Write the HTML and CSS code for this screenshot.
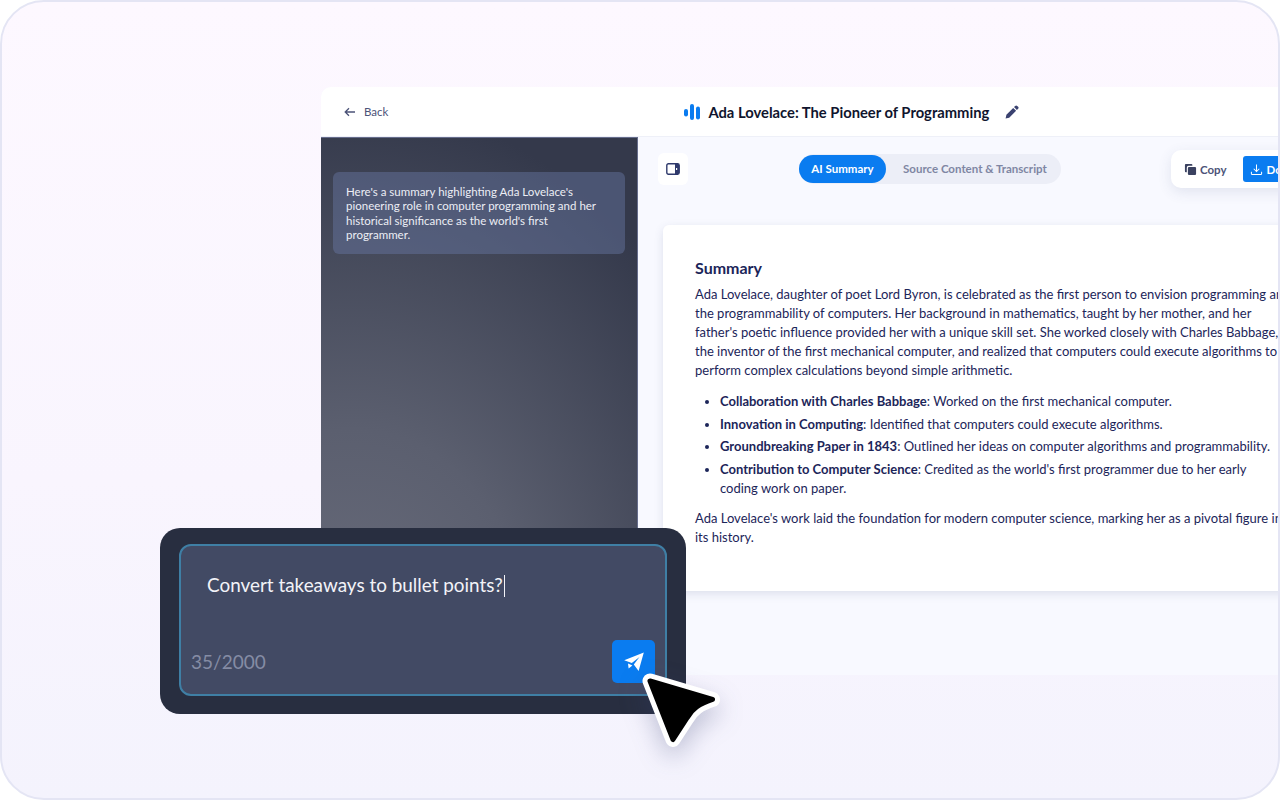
FILE: index.html
```html
<!DOCTYPE html>
<html lang="en">
<head>
    <meta charset="UTF-8">
    <title>Ada Lovelace: The Pioneer of Programming</title>
    <link rel="stylesheet" href="styles.css">
</head>
<body>
    <div class="frame">

        <!-- app window -->
        <div class="app">
            <div class="topbar">
                <a class="back">
                    <svg class="back-icon" viewBox="0 0 12 10"><path d="M11 5H1.5M5 1.2 1.2 5 5 8.8"/></svg>
                    Back
                </a>
                <div class="title">
                    <svg class="logo" viewBox="0 0 16 16"><rect x="0" y="5" width="4" height="7.5" rx="2"/><rect x="6" y="0" width="4" height="16" rx="2"/><rect x="12" y="2.5" width="4" height="13" rx="2"/></svg>
                    <span>Ada Lovelace: The Pioneer of Programming</span>
                    <svg class="pencil" viewBox="0 0 14 14"><path d="M10.2.9a1.4 1.4 0 0 1 2 0l.9.9a1.4 1.4 0 0 1 0 2l-1.2 1.2-2.9-2.9zM8.2 2.9l2.9 2.9-6.9 6.9-3.6.8.8-3.7z"/></svg>
                </div>
            </div>

            <div class="body">
                <div class="chat-panel">
                    <div class="bubble">Here's a summary highlighting Ada Lovelace's<br>pioneering role in computer programming and her<br>historical significance as the world's first<br>programmer.</div>
                </div>

                <div class="main">
                    <div class="toolbar">
                        <button class="panel-toggle">
                            <svg viewBox="0 0 14 12"><rect x="0.8" y="0.8" width="12.4" height="10.4" rx="1.6" class="panel-outline"/><path d="M9 0.8h2.6a1.6 1.6 0 0 1 1.6 1.6v7.2a1.6 1.6 0 0 1-1.6 1.6H9z" class="panel-fill"/><rect x="10" y="5" width="1.2" height="2" fill="#fff"/></svg>
                        </button>
                        <div class="tabs">
                            <div class="tab active">AI Summary</div>
                            <div class="tab">Source Content &amp; Transcript</div>
                        </div>
                        <div class="actions">
                            <button class="copy-btn">
                                <svg viewBox="0 0 14 14"><path d="M2 1h6a1 1 0 0 1 1 1v1H5a2 2 0 0 0-2 2v5H2a1 1 0 0 1-1-1V2a1 1 0 0 1 1-1z" fill="#3a4160"/><rect x="4.2" y="4.2" width="8.8" height="8.8" rx="1.2" fill="#3a4160"/></svg>
                                Copy
                            </button>
                            <button class="download-btn">
                                <svg viewBox="0 0 14 14"><path d="M7 1.5v7.5M4 6.2 7 9.2l3-3M1.5 9.5v2a1 1 0 0 0 1 1h9a1 1 0 0 0 1-1v-2"/></svg>
                                Download
                            </button>
                        </div>
                    </div>

                    <div class="doc">
                        <h2>Summary</h2>
                        <p>Ada Lovelace, daughter of poet Lord Byron, is celebrated as the first person to envision programming and<br>the programmability of computers. Her background in mathematics, taught by her mother, and her<br>father's poetic influence provided her with a unique skill set. She worked closely with Charles Babbage,<br>the inventor of the first mechanical computer, and realized that computers could execute algorithms to<br>perform complex calculations beyond simple arithmetic.</p>
                        <ul>
                            <li><b>Collaboration with Charles Babbage</b>: Worked on the first mechanical computer.</li>
                            <li><b>Innovation in Computing</b>: Identified that computers could execute algorithms.</li>
                            <li><b>Groundbreaking Paper in 1843</b>: Outlined her ideas on computer algorithms and programmability.</li>
                            <li><b>Contribution to Computer Science</b>: Credited as the world's first programmer due to her early<br>coding work on paper.</li>
                        </ul>
                        <p>Ada Lovelace's work laid the foundation for modern computer science, marking her as a pivotal figure in<br>its history.</p>
                    </div>
                </div>
            </div>
        </div>

        <!-- floating prompt box -->
        <div class="prompt">
            <div class="prompt-inner">
                <div class="prompt-text">Convert takeaways to bullet points?<span class="caret"></span></div>
                <div class="prompt-foot">
                    <span class="counter">35/2000</span>
                    <button class="send">
                        <svg viewBox="0 0 20 20"><path d="M19.8.5 14.6 19 9.8 12.6 15.5 5 7.8 10.9.2 8.2z"/><path d="M4 11.5 8.4 13.6 4.6 16.6z"/></svg>
                    </button>
                </div>
            </div>
        </div>

        <svg class="pointer" viewBox="0 0 90 90">
            <path class="pointer-edge" d="M10 13 72.5 31.5 C59 36 52 41 47 50 L33 71.5 Z"/>
            <path class="pointer-fill" d="M10 13 72.5 31.5 C59 36 52 41 47 50 L33 71.5 Z"/>
        </svg>
    </div>
</body>
</html>
```

FILE: styles.css
```css
* {
    margin: 0;
    padding: 0;
    box-sizing: border-box;
}

body {
    font-family: Lato, "Open Sans", sans-serif;
    background: #fff;
    color: #1c2559;
}

button {
    border: none;
    font-family: inherit;
    cursor: pointer;
}

.frame {
    position: relative;
    width: 1280px;
    height: 800px;
    padding: 85px 0 0 319px;
    overflow: hidden;
    border: 2px solid #e4e5f4;
    border-radius: 44px;
    background: linear-gradient(180deg, #fdf8ff 0%, #f9f5fe 60%, #f4f3fd 100%);
}

/* ---------- app window ---------- */

.app {
    width: 1000px;
    height: 588px;
    display: flex;
    flex-direction: column;
    border-radius: 10px 0 0 0;
    overflow: hidden;
    background: #f8f9ff;
}

.topbar {
    height: 50px;
    display: flex;
    align-items: center;
    position: relative;
    padding-left: 23px;
    background: #fff;
    border-bottom: 1px solid #eef0f8;
}

.back {
    display: flex;
    align-items: center;
    gap: 8px;
    font-size: 11.5px;
    color: #4c5378;
}

.back-icon {
    width: 12px;
    height: 10px;
    fill: none;
    stroke: #4c5378;
    stroke-width: 1.3;
}

.title {
    display: flex;
    align-items: center;
    margin-left: 296px;
    font-size: 14.75px;
    font-weight: 700;
    color: #10152e;
}

.logo {
    width: 16px;
    height: 16px;
    margin-right: 8px;
    fill: #0a7cf0;
}

.pencil {
    width: 14px;
    height: 14px;
    margin-left: 16px;
    fill: #3a4270;
}

.body {
    flex: 1;
    display: flex;
    min-height: 0;
}

.chat-panel {
    width: 317px;
    padding: 34px 12px 0 12px;
    background: radial-gradient(ellipse 430px 560px at 10% 98%, #6a6d7c 0%, #5b5f6f 42%, #34394b 100%);
    border-top: 1px solid #666d8c;
    border-right: 1px solid #666d8c;
}

.bubble {
    height: 82px;
    padding: 13px;
    font-size: 11.5px;
    line-height: 14.4px;
    color: #eceef5;
    background: rgba(105, 120, 165, 0.45);
    border-radius: 6px;
}

.main {
    flex: 1;
    min-width: 0;
    padding: 13px 0 0 20px;
}

.toolbar {
    display: flex;
    align-items: flex-start;
    height: 75px;
}

.panel-toggle {
    flex: none;
    width: 30px;
    height: 32px;
    margin-top: 3px;
    display: flex;
    align-items: center;
    justify-content: center;
    background: #fff;
    border-radius: 6px;
}

.panel-toggle svg {
    width: 14px;
    height: 12px;
}

.panel-outline {
    fill: #fff;
    stroke: #2f3a6c;
    stroke-width: 1.4;
}

.panel-fill {
    fill: #2f3a6c;
}

.tabs {
    flex: none;
    display: flex;
    align-items: center;
    width: 262px;
    height: 30px;
    margin: 4px 0 0 111px;
    padding: 1px 0;
    background: #eceef7;
    border-radius: 15px;
}

.tab {
    height: 28px;
    padding: 0 14px;
    line-height: 28px;
    font-size: 11.5px;
    font-weight: 700;
    white-space: nowrap;
    color: #7f86a3;
}

.tab.active {
    width: 87px;
    color: #fff;
    text-align: center;
    padding: 0;
    background: #0a7cf0;
    border-radius: 14px;
}

.tab + .tab {
    padding-left: 17px;
}

.actions {
    display: flex;
    align-items: center;
    gap: 16px;
    flex: none;
    height: 38px;
    margin-left: 110px;
    padding: 0 6px 0 13px;
    background: #fff;
    border-radius: 10px 0 0 10px;
    box-shadow: 0 4px 14px rgba(60, 70, 120, 0.12);
}

.actions button {
    display: flex;
    align-items: center;
    font-size: 11.5px;
    font-weight: 700;
}

.actions svg {
    width: 13px;
    height: 13px;
}

.copy-btn {
    gap: 3px;
    background: none;
    color: #4c5378;
}

.download-btn {
    gap: 4px;
    height: 26px;
    padding: 0 7px;
    color: #fff;
    background: #0a7cf0;
    border-radius: 3px;
}

.download-btn svg {
    fill: none;
    stroke: #fff;
    stroke-width: 1.1;
}

.doc {
    width: 700px;
    height: 366px;
    margin-left: 5px;
    padding: 32px;
    font-size: 13px;
    line-height: 19px;
    white-space: nowrap;
    background: #fff;
    border-radius: 6px 0 0 6px;
    box-shadow: 0 3px 10px rgba(60, 70, 120, 0.14);
}

.doc h2 {
    margin-bottom: 7px;
    font-size: 16px;
    line-height: 21px;
    font-weight: 700;
}

.doc ul {
    margin: 12px 0 11px;
    padding-left: 25px;
}

.doc li {
    margin-bottom: 3.5px;
}

/* ---------- prompt box ---------- */

.prompt {
    position: absolute;
    left: 158px;
    top: 526px;
    width: 526px;
    height: 186px;
    padding: 16px 19px 18px;
    background: #282e40;
    border-radius: 20px;
}

.prompt-inner {
    height: 100%;
    display: flex;
    flex-direction: column;
    justify-content: space-between;
    padding: 27px 10px 11px 10px;
    background: #424a64;
    border: 2px solid #3f7fa5;
    border-radius: 12px;
}

.prompt-text {
    padding-left: 16px;
    font-size: 18.9px;
    line-height: 24px;
    color: #f2f3f8;
}

.caret {
    display: inline-block;
    width: 1px;
    height: 22px;
    margin-left: 1px;
    vertical-align: -5px;
    background: #f2f3f8;
}

.prompt-foot {
    display: flex;
    align-items: center;
    justify-content: space-between;
}

.counter {
    font-size: 19px;
    color: #858ca4;
}

.send {
    width: 43px;
    height: 43px;
    display: flex;
    align-items: center;
    justify-content: center;
    background: #0a7cf0;
    border-radius: 5px;
}

.send svg {
    width: 20px;
    height: 20px;
    fill: #fff;
}

.pointer {
    position: absolute;
    left: 638px;
    top: 666px;
    width: 90px;
    height: 90px;
    filter: drop-shadow(0 10px 12px rgba(50, 60, 110, 0.28));
}

.pointer-edge {
    fill: #fff;
    stroke: #fff;
    stroke-width: 15;
    stroke-linejoin: round;
}

.pointer-fill {
    fill: #000;
    stroke: #000;
    stroke-width: 5;
    stroke-linejoin: round;
}
```
